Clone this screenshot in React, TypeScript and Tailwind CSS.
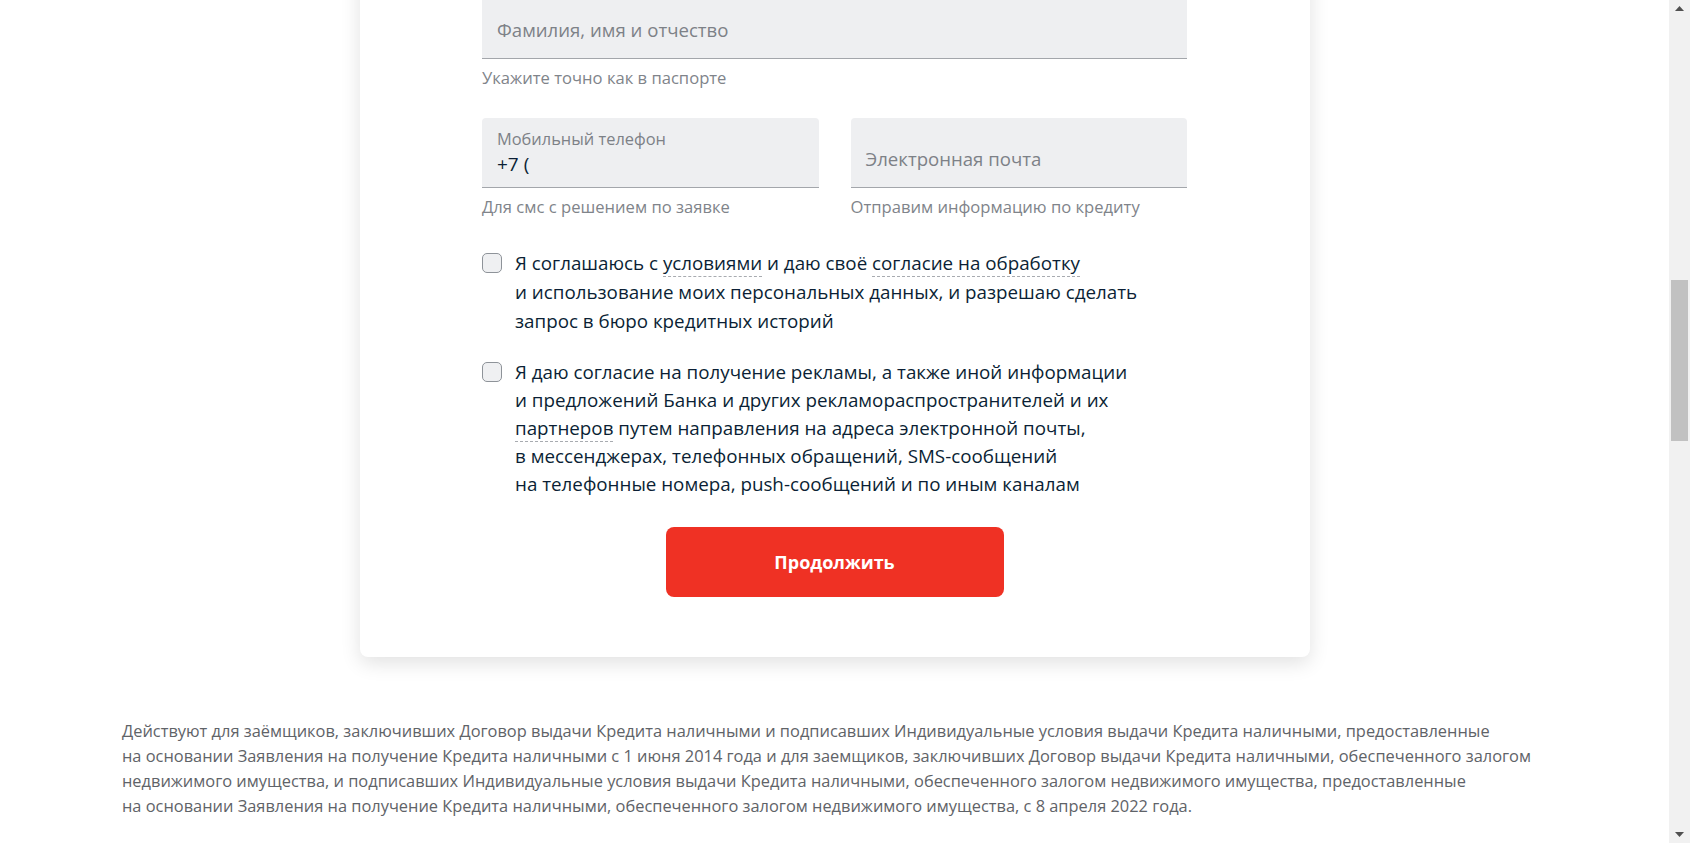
import React from "react";

const font = "font-['Open_Sans','Liberation_Sans',sans-serif]";

function Dashed({ children }: { children: React.ReactNode }) {
  return (
    <span className="border-b border-dashed border-[#a8abb0]">{children}</span>
  );
}

function Checkbox() {
  return (
    <span className="mt-[4px] h-[20px] w-[20px] shrink-0 rounded-[5px] border border-[#8e9399] bg-[#eff0f2]" />
  );
}

export default function App() {
  return (
    <div className={`flex h-[843px] w-full overflow-hidden bg-white ${font}`}>
      {/* main page */}
      <div className="flex-1 flex flex-col">
        {/* form card */}
        <div className="mx-auto mt-[-51px] w-[950px] rounded-lg bg-white pt-[40px] pb-[60px] shadow-[0_6px_20px_rgba(0,0,0,0.12)]">
          <div className="mx-auto w-[705px]">
            {/* full name */}
            <div className="flex h-[70px] items-start rounded-t-[4px] border-b border-[#a3a6ab] bg-[#eeeff1] px-[15px] pt-[29px]">
              <span className="text-[18.6px] leading-[24px] text-[#7d8187]">
                Фамилия, имя и отчество
              </span>
            </div>
            <p className="mt-[9px] text-[16.6px] leading-[20px] text-[#80848a]">
              Укажите точно как в паспорте
            </p>

            {/* phone + email */}
            <div className="mt-[30px] grid grid-cols-2 gap-[32px]">
              <div>
                <div className="flex h-[70px] flex-col rounded-t-[4px] border-b border-[#a3a6ab] bg-[#eeeff1] px-[15px] pt-[12px]">
                  <span className="text-[16.4px] leading-[18px] text-[#7d8187]">
                    Мобильный телефон
                  </span>
                  <span className="mt-[4px] text-[19px] leading-[24px] text-[#0b1f35]">
                    +7 (
                  </span>
                </div>
                <p className="mt-[9px] text-[16.6px] leading-[20px] text-[#80848a]">
                  Для смс с решением по заявке
                </p>
              </div>
              <div>
                <div className="flex h-[70px] items-start rounded-t-[4px] border-b border-[#a3a6ab] bg-[#eeeff1] px-[15px] pt-[29px]">
                  <span className="text-[18.6px] leading-[24px] text-[#7d8187]">
                    Электронная почта
                  </span>
                </div>
                <p className="mt-[9px] text-[16.6px] leading-[20px] text-[#80848a]">
                  Отправим информацию по кредиту
                </p>
              </div>
            </div>

            {/* agreements */}
            <div className="mt-[32px] flex gap-[13px]">
              <Checkbox />
              <p className="text-[18.8px] leading-[29px] text-[#0b1f35]">
                Я соглашаюсь с <Dashed>условиями</Dashed> и даю своё{" "}
                <Dashed>согласие на обработку</Dashed>
                <br />
                и использование моих персональных данных, и разрешаю сделать
                <br />
                запрос в бюро кредитных историй
              </p>
            </div>
            <div className="mt-[22px] flex gap-[13px]">
              <Checkbox />
              <p className="text-[18.8px] leading-[28px] text-[#0b1f35]">
                Я даю согласие на получение рекламы, а также иной информации
                <br />
                и предложений Банка и других рекламораспространителей и их
                <br />
                <Dashed>партнеров</Dashed> путем направления на адреса электронной
                почты,
                <br />
                в мессенджерах, телефонных обращений, SMS-сообщений
                <br />
                на телефонные номера, push-сообщений и по иным каналам
              </p>
            </div>

            {/* submit */}
            <div className="mt-[29px] flex justify-center">
              <button className="h-[70px] w-[338px] rounded-lg bg-[#ef3124] text-[18px] font-bold text-white">
                Продолжить
              </button>
            </div>
          </div>
        </div>

        {/* legal note */}
        <p className="mt-[61px] pl-[122px] text-[16.4px] leading-[25px] text-[#5f6368]">
          Действуют для заёмщиков, заключивших Договор выдачи Кредита наличными
          и подписавших Индивидуальные условия выдачи Кредита наличными,
          предоставленные
          <br />
          на основании Заявления на получение Кредита наличными с 1 июня 2014
          года и для заемщиков, заключивших Договор выдачи Кредита наличными,
          обеспеченного залогом
          <br />
          недвижимого имущества, и подписавших Индивидуальные условия выдачи
          Кредита наличными, обеспеченного залогом недвижимого имущества,
          предоставленные
          <br />
          на основании Заявления на получение Кредита наличными, обеспеченного
          залогом недвижимого имущества, с 8 апреля 2022 года.
        </p>
      </div>

      {/* browser scrollbar */}
      <div className="flex w-[21px] shrink-0 flex-col items-center bg-[#f1f1f1]">
        <svg width="9" height="5" viewBox="0 0 9 5" className="mt-[6px] fill-[#505050]">
          <path d="M4.5 0 9 5H0z" />
        </svg>
        <div className="mt-[269px] h-[161px] w-[17px] bg-[#c1c1c1]" />
        <div className="flex-1" />
        <svg width="9" height="5" viewBox="0 0 9 5" className="mb-[6px] fill-[#505050]">
          <path d="M0 0h9L4.5 5z" />
        </svg>
      </div>
    </div>
  );
}
